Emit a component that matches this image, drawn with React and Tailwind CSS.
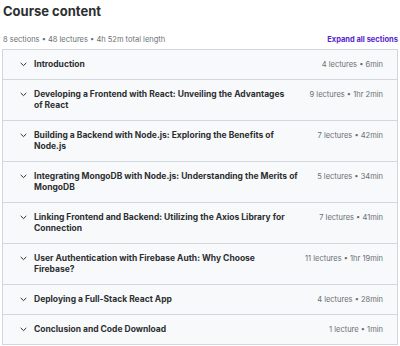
import { useState } from "react";

const sections = [
  { title: "Introduction", meta: "4 lectures • 6min" },
  { title: "Developing a Frontend with React: Unveiling the Advantages of React", meta: "9 lectures • 1hr 2min" },
  { title: "Building a Backend with Node.js: Exploring the Benefits of Node.js", meta: "7 lectures • 42min" },
  { title: "Integrating MongoDB with Node.js: Understanding the Merits of MongoDB", meta: "5 lectures • 34min" },
  { title: "Linking Frontend and Backend: Utilizing the Axios Library for Connection", meta: "7 lectures • 41min" },
  { title: "User Authentication with Firebase Auth: Why Choose Firebase?", meta: "11 lectures • 1hr 19min" },
  { title: "Deploying a Full-Stack React App", meta: "4 lectures • 28min" },
  { title: "Conclusion and Code Download", meta: "1 lecture • 1min" },
];

function Chevron() {
  return (
    <svg width="7" height="5" viewBox="0 0 7 5" className="shrink-0 mt-[3px]">
      <path d="M1 1.2 L3.5 3.6 L6 1.2" fill="none" stroke="#2d2f31" strokeWidth="1" strokeLinecap="round" strokeLinejoin="round" />
    </svg>
  );
}

export default function App() {
  const [open, setOpen] = useState({});

  return (
    <div className="w-[400px] h-[346px] bg-white px-[2px] font-['Inter',sans-serif] text-[#2d2f31]">
      <h2 className="pl-px pt-[2px] text-[13px] leading-[18px] font-bold">Course content</h2>
      <div className="flex items-end justify-between mt-[15px] mb-[4px] pl-px">
        <span className="text-[7.5px] leading-[10px] text-[#6a6f73]">
          8 sections • 48 lectures • 4h 52m total length
        </span>
        <button className="text-[7.5px] leading-[10px] font-bold text-[#5624d0]">
          Expand all sections
        </button>
      </div>
      <div className="border border-[#d1d7dc]">
        {sections.map((s, i) => (
          <div
            key={i}
            onClick={() => setOpen({ ...open, [i]: !open[i] })}
            className="flex items-start gap-[7px] pl-[17px] pr-[14px] py-[9px] bg-[#f7f9fa] border-b border-[#d1d7dc] last:border-b-0 cursor-pointer"
          >
            <Chevron />
            <div className="flex-1 text-[8.5px] leading-[11px] font-bold">{s.title}</div>
            <div className="shrink-0 ml-[11px] text-[7.5px] leading-[11px] text-[#6a6f73]">{s.meta}</div>
          </div>
        ))}
      </div>
    </div>
  );
}
